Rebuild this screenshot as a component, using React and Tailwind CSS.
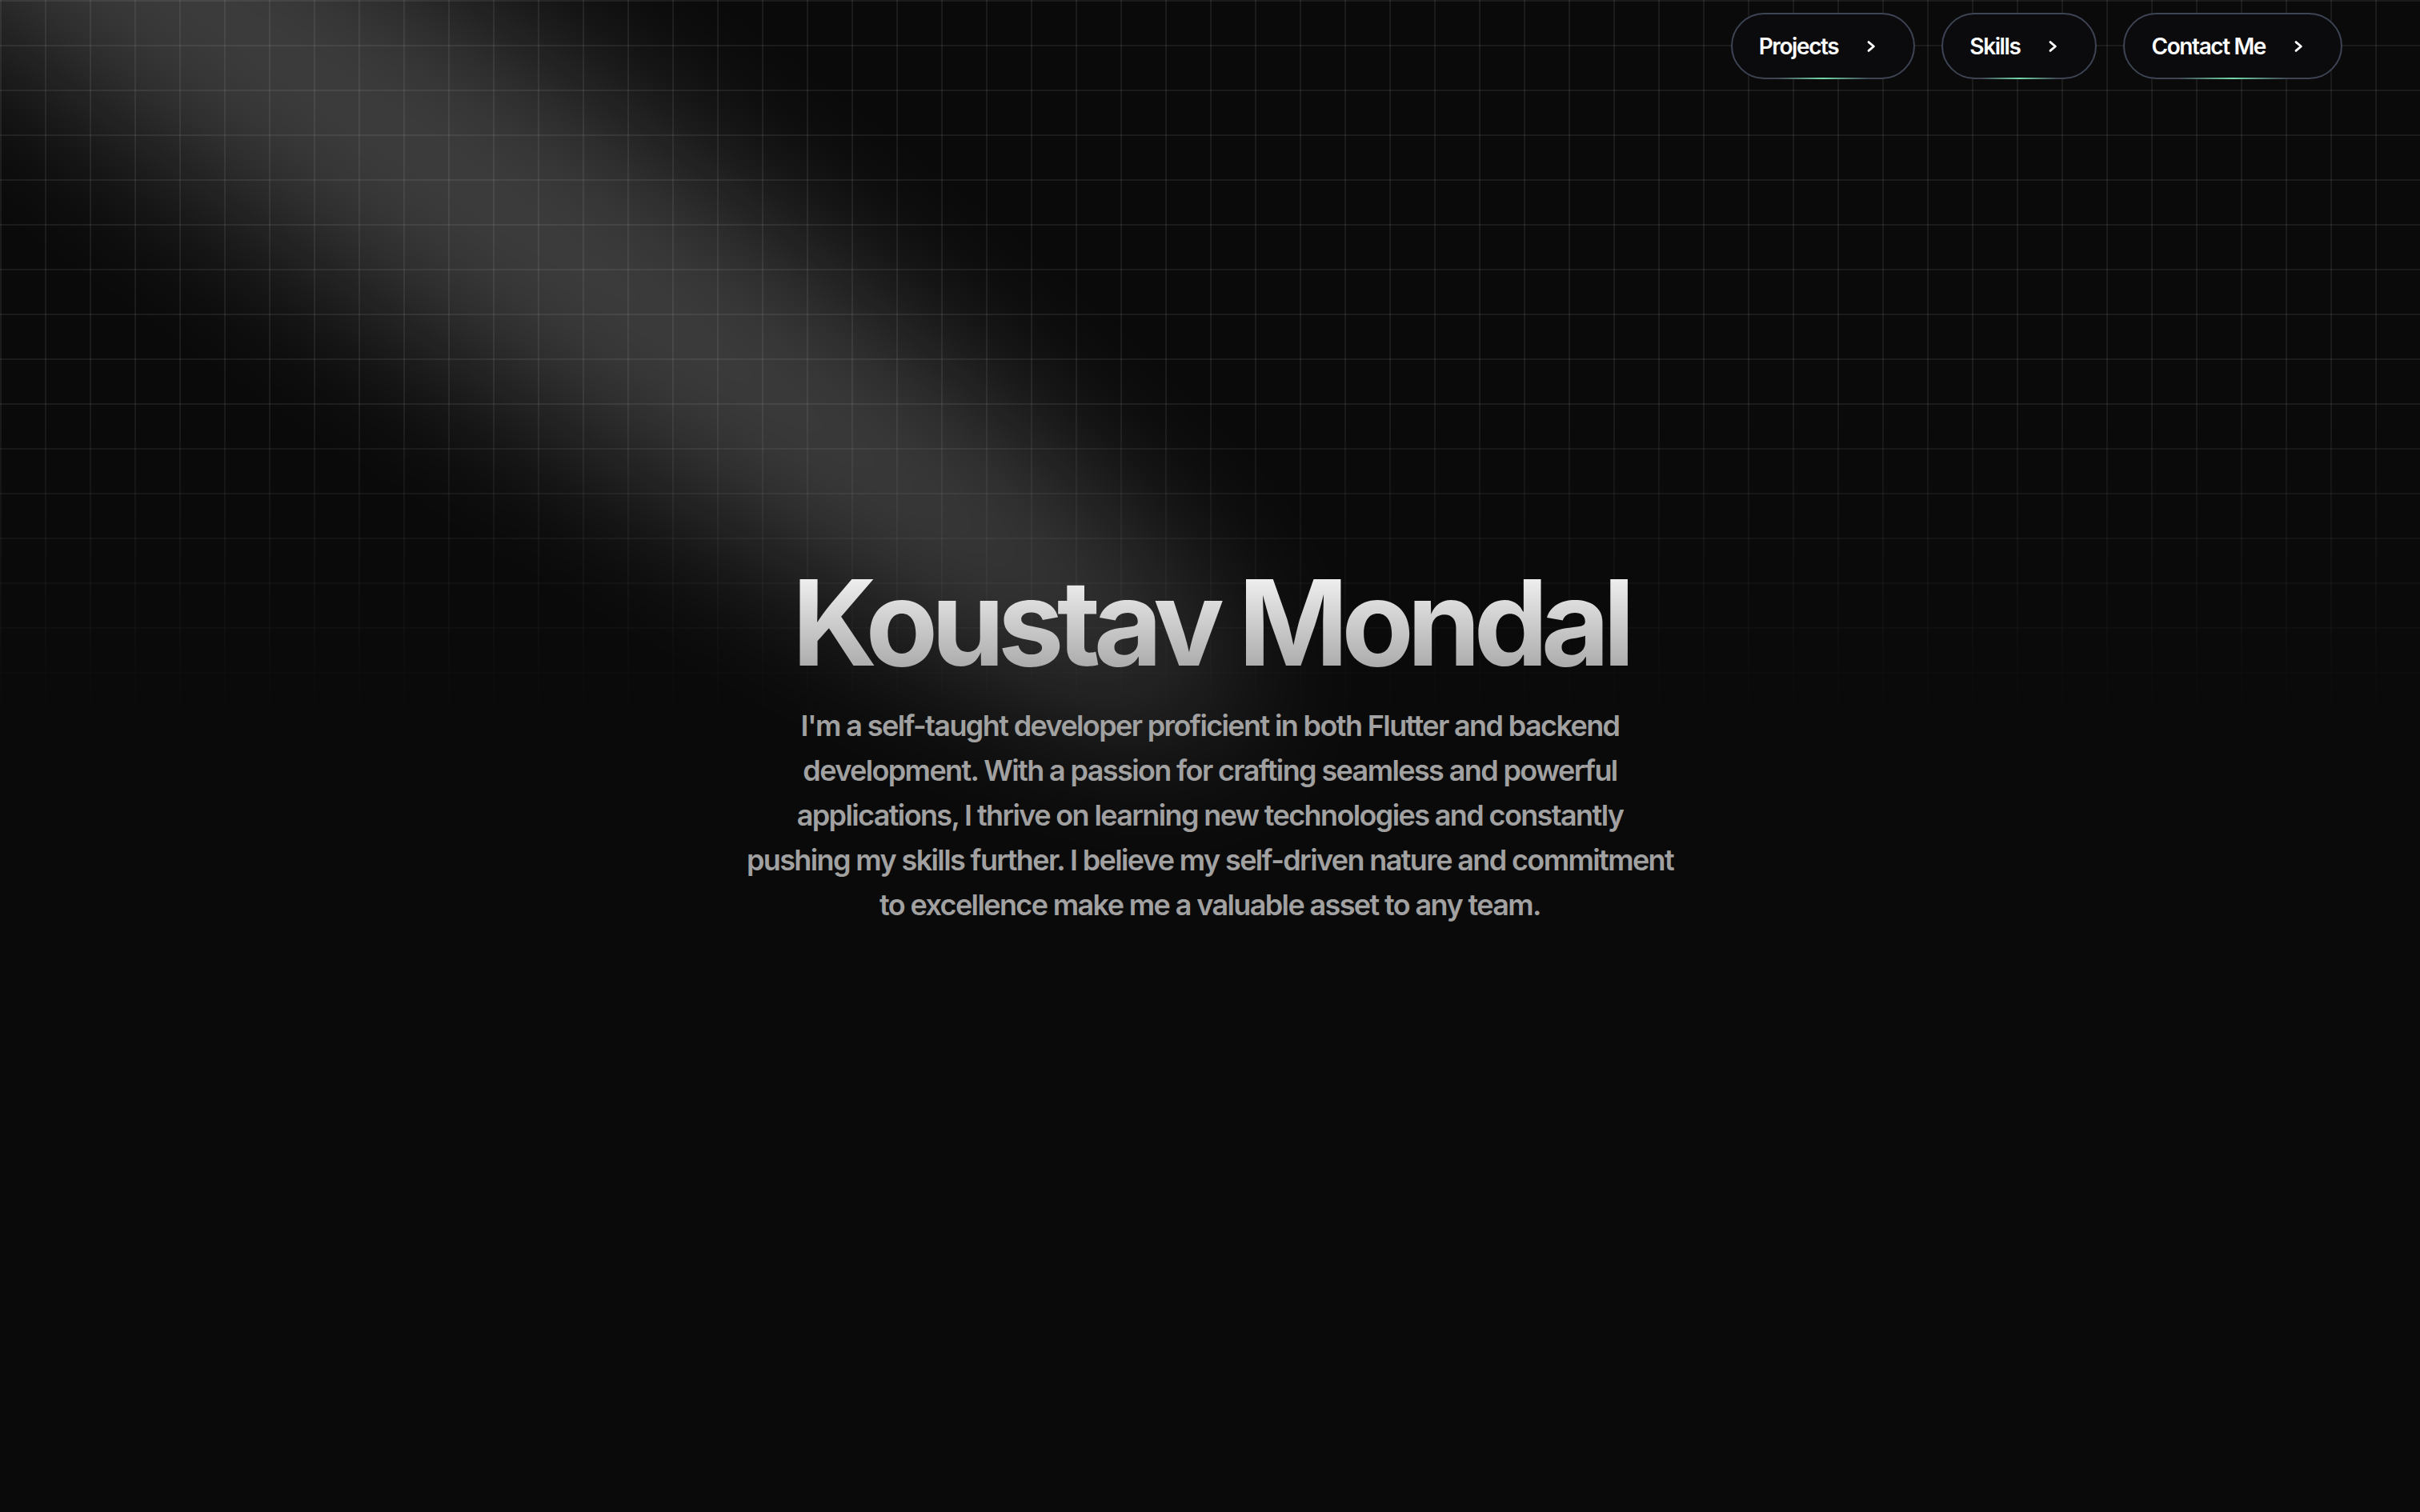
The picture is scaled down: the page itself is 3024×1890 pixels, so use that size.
import React from "react";

function Chevron() {
  return (
    <svg width="16" height="16" viewBox="0 0 16 16" fill="none" className="shrink-0">
      <path d="M5 2.6L11.4 8L5 13.4" stroke="white" strokeWidth="2.8" strokeLinecap="round" strokeLinejoin="round" />
    </svg>
  );
}

function NavButton({ label }) {
  return (
    <a
      href="#"
      className="relative flex h-[83px] items-center gap-[33px] rounded-full border-2 border-[#3d4453] bg-[#0b0b0d] pl-[33px] pr-[45px] text-[28px] leading-[40px] font-semibold tracking-[-0.05em] text-white"
    >
      <span>{label}</span>
      <Chevron />
      <span className="absolute inset-x-0 -bottom-[2px] mx-auto h-[2px] w-1/2 bg-gradient-to-r from-transparent via-[#72d9a8] to-transparent" />
    </a>
  );
}

function Spotlight() {
  return (
    <svg
      className="pointer-events-none absolute left-[-790px] top-[-1438px] z-[1] h-[3194px] w-[2540px]"
      viewBox="0 0 3787 2842"
      fill="none"
    >
      <g filter="url(#spotlight-blur)">
        <ellipse
          cx="1924.71"
          cy="273.501"
          rx="1924.71"
          ry="273.501"
          transform="matrix(-0.822377 -0.568943 -0.568943 0.822377 3631.88 2291.09)"
          fill="white"
          fillOpacity="0.21"
        />
      </g>
      <defs>
        <filter
          id="spotlight-blur"
          x="0.860352"
          y="0.838989"
          width="3785.16"
          height="2840.26"
          filterUnits="userSpaceOnUse"
          colorInterpolationFilters="sRGB"
        >
          <feFlood floodOpacity="0" result="BackgroundImageFix" />
          <feBlend mode="normal" in="SourceGraphic" in2="BackgroundImageFix" result="shape" />
          <feGaussianBlur stdDeviation="151" result="blur" />
        </filter>
      </defs>
    </svg>
  );
}

export default function App() {
  const lines = [
    "I'm a self-taught developer proficient in both Flutter and backend",
    "development. With a passion for crafting seamless and powerful",
    "applications, I thrive on learning new technologies and constantly",
    "pushing my skills further. I believe my self-driven nature and commitment",
    "to excellence make me a valuable asset to any team.",
  ];
  return (
    <div className="relative flex h-screen w-full flex-col overflow-hidden bg-[#0a0a0a] font-['Inter',sans-serif]">
      <div className="pointer-events-none absolute inset-x-0 top-0 h-[920px] bg-[linear-gradient(to_right,rgba(255,255,255,0.07)_2px,transparent_2px),linear-gradient(to_bottom,rgba(255,255,255,0.07)_2px,transparent_2px)] bg-[size:56px_56px] [mask-image:linear-gradient(to_bottom,black_54%,transparent)]" />
      <Spotlight />
      <header className="relative z-20 flex justify-end gap-[33px] pt-[16px] pr-[97px]">
        <NavButton label="Projects" />
        <NavButton label="Skills" />
        <NavButton label="Contact Me" />
      </header>
      <main className="relative z-10 flex flex-1 flex-col items-center justify-center pb-[125px]">
        <h1 className="bg-gradient-to-b from-neutral-50 to-neutral-400 bg-clip-text text-[148px] leading-none font-bold tracking-[-0.06em] text-transparent">
          Koustav Mondal
        </h1>
        <p className="mt-[26px] text-center text-[36px] leading-[56px] font-semibold tracking-[-0.045em] text-neutral-400">
          {lines.map((l) => (
            <span key={l} className="block whitespace-nowrap">
              {l}
            </span>
          ))}
        </p>
      </main>
    </div>
  );
}
